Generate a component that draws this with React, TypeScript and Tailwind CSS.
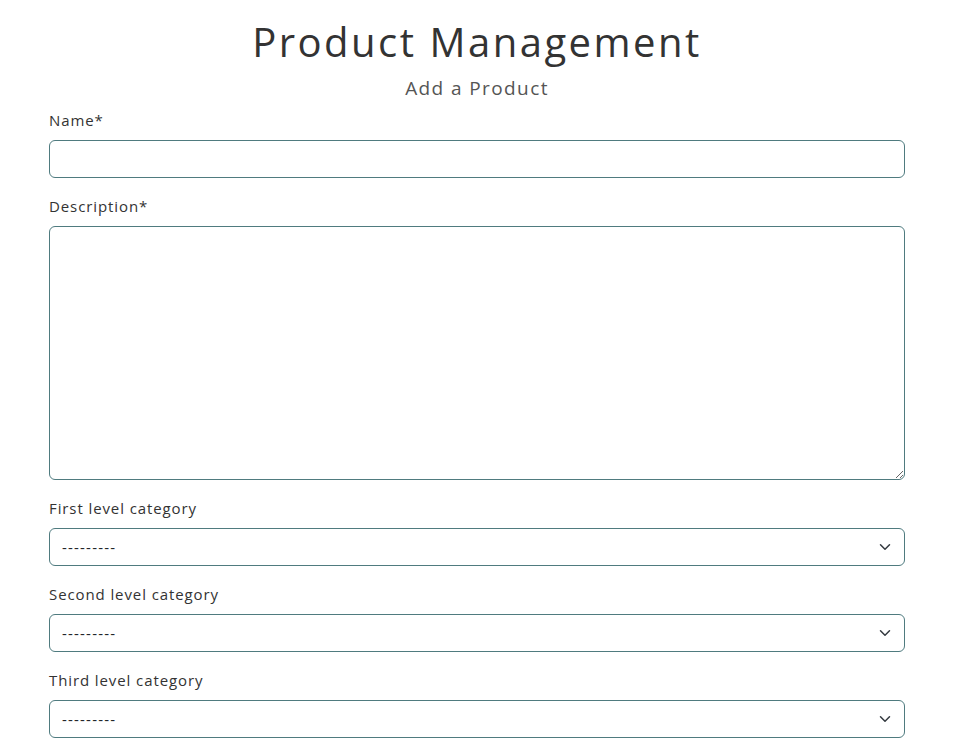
import React from 'react';

const font = { fontFamily: '"Open Sans", "DejaVu Sans", sans-serif' };

function Chevron() {
  return (
    <svg className="pointer-events-none absolute right-[12px] top-1/2 -translate-y-1/2" width="16" height="12" viewBox="0 0 16 16" fill="none">
      <path d="m2 5 6 6 6-6" stroke="#343a40" strokeWidth="2" strokeLinecap="round" strokeLinejoin="round" />
    </svg>
  );
}

function SelectField({ label }: { label: string }) {
  return (
    <div className="mb-4">
      <label className="mb-2 block text-[15px] leading-6 tracking-[0.9px] text-[#333]">{label}</label>
      <div className="relative">
        <select className="block h-[38px] w-full appearance-none rounded-md border border-[#4f7b7f] bg-white pl-3 pr-9 text-[15px] tracking-[1.2px] text-[#212529] outline-none">
          <option>---------</option>
        </select>
        <Chevron />
      </div>
    </div>
  );
}

export default function App() {
  return (
    <div className="min-h-screen bg-white" style={font}>
      <div className="ml-[49px] w-[856px] pt-[16px]">
        <h1 className="text-center text-[40px] leading-[52px] tracking-[2.5px] text-[#333]">Product Management</h1>
        <p className="text-center text-[19px] leading-[40px] tracking-[1.4px] text-[#555]">Add a Product</p>

        <form>
          <div className="mb-4">
            <label className="mb-2 block text-[15px] leading-6 tracking-[0.9px] text-[#333]">Name*</label>
            <input type="text" className="block h-[38px] w-full rounded-md border border-[#4f7b7f] px-3 text-[15px] outline-none" />
          </div>
          <div className="mb-4">
            <label className="mb-2 block text-[15px] leading-6 tracking-[0.9px] text-[#333]">Description*</label>
            <textarea className="block h-[254px] w-full rounded-md border border-[#4f7b7f] px-3 py-1.5 text-[15px] outline-none" />
          </div>
          <SelectField label="First level category" />
          <SelectField label="Second level category" />
          <SelectField label="Third level category" />
        </form>
      </div>
    </div>
  );
}
